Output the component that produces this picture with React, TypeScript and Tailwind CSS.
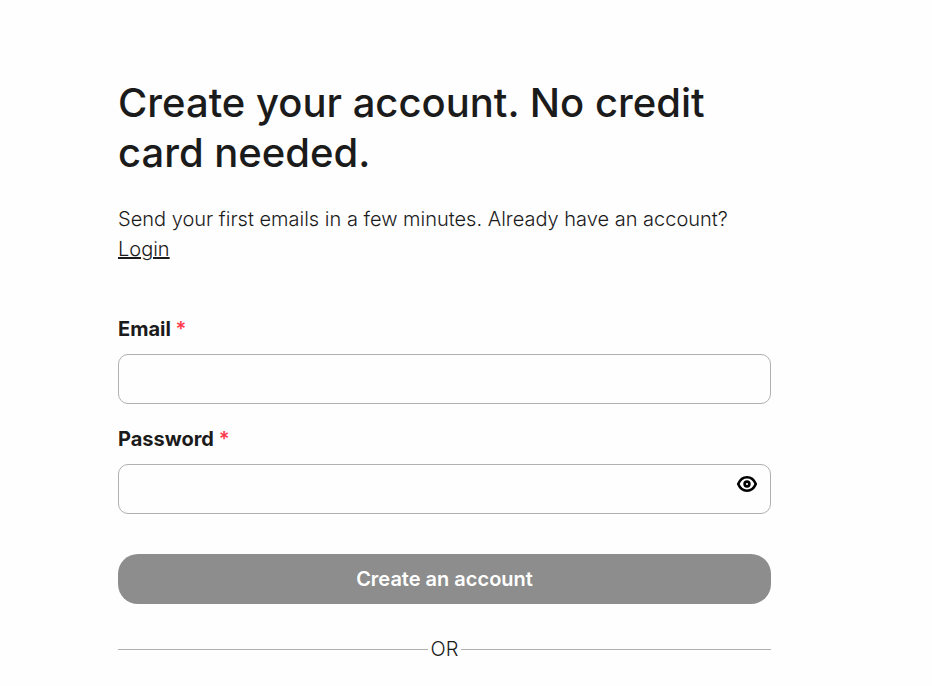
import { useState } from "react"

const App = () => {
  const [showPassword, setShowPassword] = useState(false)

  return (
    <main className="min-h-screen bg-[#fefefe] pt-[78px] pb-4 pl-[118px] pr-[161px] font-['Inter',sans-serif] text-[#1b1b1b]">
      <h1 className="text-[40px] leading-[50px] font-medium">
        Create your account. No credit card needed.
      </h1>
      <p className="mt-[26px] text-[20px] leading-[30px] font-light">
        Send your first emails in a few minutes. Already have an account?{" "}
        <a href="#" className="underline decoration-2">Login</a>
      </p>

      <form className="mt-[50px]" onSubmit={(e) => e.preventDefault()}>
        <label htmlFor="email" className="block text-[20px] leading-[30px] font-bold">
          Email <span className="font-semibold text-[#ff3b4e]">*</span>
        </label>
        <input id="email" type="email" className="mt-[10px] block h-[50px] w-full rounded-[10px] border border-[#b0b0b0] px-4 text-[20px]" />

        <label htmlFor="password" className="mt-5 block text-[20px] leading-[30px] font-bold">
          Password <span className="font-semibold text-[#ff3b4e]">*</span>
        </label>
        <div className="mt-[10px] flex h-[50px] items-start rounded-[10px] border border-[#b0b0b0]">
          <input id="password" type={showPassword ? "text" : "password"} className="h-full min-w-0 flex-1 rounded-[10px] px-4 text-[20px] outline-none" />
          <button type="button" aria-label="Show password" className="mt-2 mr-3 size-[22px]" onClick={() => setShowPassword(!showPassword)}>
            <svg viewBox="0 0 22 22" className="size-[22px]" fill="none" stroke="black" strokeWidth="2.6" strokeLinejoin="round">
              <path d="M2.2 11C4 6.800 7.200 4.300 11 4.300S18 6.800 19.800 11C18 15.200 14.800 17.700 11 17.700S4 15.200 2.200 11Z" />
              <circle cx="11" cy="11" r="2.4" />
            </svg>
          </button>
        </div>

        <button type="submit" className="mt-10 block h-[50px] w-full rounded-[20px] bg-[#8d8d8d] text-[20px] font-semibold text-white">
          Create an account
        </button>
      </form>

      <div className="mt-[30px] flex items-center gap-[3px] text-[20px] leading-[30px] font-light">
        <span className="h-px flex-1 bg-[#b0b0b0]" />
        OR
        <span className="h-px flex-1 bg-[#b0b0b0]" />
      </div>
    </main>
  )
}

export default App
